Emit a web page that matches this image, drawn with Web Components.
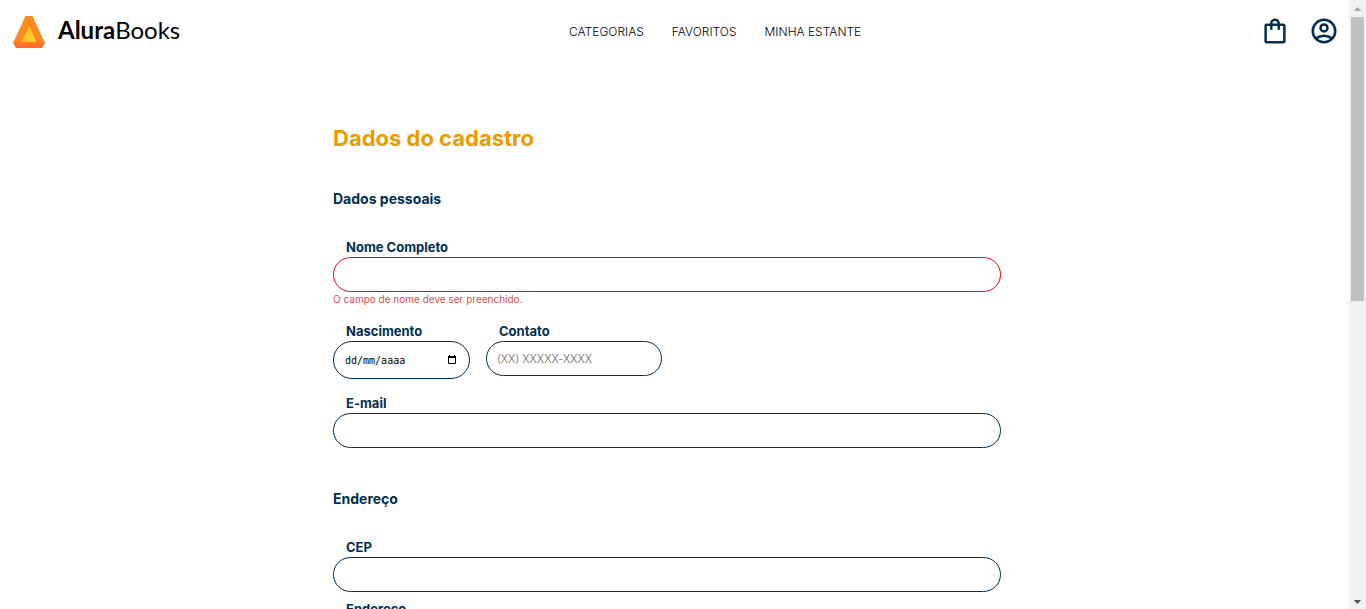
<!DOCTYPE html>
<html lang="pt-BR">
<head>
<meta charset="utf-8">
<title>AluraBooks - Cadastro</title>
<style>
  html, body { margin: 0; height: 100%; }
  body {
    --navy: #002f52;
    --orange: #eb9b00;
    background: #fff;
    color: #000;
    font-family: Inter, "Open Sans", sans-serif;
    overflow: hidden;
  }
</style>
</head>
<body>
<alura-shell>
  <alura-header slot="header"></alura-header>
  <main>
    <alura-form heading="Dados do cadastro">
      <form-section heading="Dados pessoais">
        <text-field label="Nome Completo" name="nome" error="O campo de nome deve ser preenchido."></text-field>
        <field-row>
          <date-field label="Nascimento" name="nascimento" hint="dd/mm/aaaa"></date-field>
          <text-field label="Contato" name="contato" type="tel" hint="(XX) XXXXX-XXXX"></text-field>
        </field-row>
        <text-field label="E-mail" name="email" type="email"></text-field>
      </form-section>
      <form-section heading="Endereço" compact>
        <text-field label="CEP" name="cep"></text-field>
        <text-field label="Endereço" name="endereco"></text-field>
      </form-section>
    </alura-form>
  </main>
</alura-shell>

<script>
  function define(name, render) {
    customElements.define(name, class extends HTMLElement {
      constructor() {
        super();
        this.attachShadow({ mode: 'open' });
      }
      connectedCallback() {
        this.shadowRoot.innerHTML = render(this);
      }
    });
  }

  const fieldStyle = `
    :host { display: block; }
    label {
      display: block;
      padding-left: 13px;
      color: var(--navy);
      font-size: 13px;
      font-weight: 700;
      line-height: 20px;
    }
    input {
      display: block;
      box-sizing: border-box;
      width: 100%;
      height: 35px;
      margin: 0;
      padding: 0 10px;
      border: 1px solid var(--navy);
      border-radius: 20px;
      outline: 0;
      background: #fff;
      color: #000;
      font: 300 11px/16px Inter, sans-serif;
    }
    input::placeholder { color: #666; opacity: 1; }
  `;

  define('alura-shell', () => `
    <style>
      :host { display: grid; grid-template-columns: minmax(0, 1fr) 17px; height: 100vh; }
      .page { overflow: hidden; }
    </style>
    <div class="page"><slot name="header"></slot><slot></slot></div>
    <page-scrollbar aria-hidden="true"></page-scrollbar>
  `);

  define('page-scrollbar', () => `
    <style>
      :host { display: flex; flex-direction: column; background: #f1f1f1; }
      svg { display: block; width: 17px; height: 17px; flex: none; }
      .track { flex: 1; padding: 0 2px; }
      .thumb { height: 49.4%; background: #c1c1c1; }
    </style>
    <svg viewBox="0 0 17 17"><path d="M5 11h7L8.500 7z" fill="#a3a3a3"/></svg>
    <div class="track"><div class="thumb"></div></div>
    <svg viewBox="0 0 17 17"><path d="M5 8h7L8.500 12z" fill="#505050"/></svg>
  `);

  define('alura-header', () => `
    <style>
      :host { display: block; }
      header {
        display: flex;
        align-items: center;
        justify-content: space-between;
        height: 64px;
        padding: 0 10px 0 13px;
        box-sizing: border-box;
      }
      a { color: inherit; text-decoration: none; }
      .brand { display: flex; align-items: center; gap: 13px; }
      .brand svg { display: block; width: 32px; height: 32px; }
      .brand span { font: 400 24px/28px Lato, sans-serif; padding-bottom: 4px; }
      nav { display: flex; gap: 28px; font-size: 12px; line-height: 20px; font-weight: 300; }
      .icons { display: flex; gap: 19px; padding: 0 0 2px 10px; }
      .icons svg { display: block; width: 30px; height: 30px; fill: none; stroke: var(--navy); stroke-width: 2; }
    </style>
    <header>
      <a class="brand" href="#">
        <svg viewBox="0 0 32 32" aria-hidden="true">
          <defs><linearGradient id="g" x1="0" y1="0" x2="0" y2="1"><stop offset=".7" stop-color="#ff8a22"/><stop offset="1" stop-color="#ff6626"/></linearGradient></defs>
          <path d="M12.500 0h7L32 27l-3 5H3l-3-5z" fill="url(#g)"/>
          <path d="M16 10l7.500 16h-15z" fill="#ffcb2b"/>
        </svg>
        <span><b>Alura</b>Books</span>
      </a>
      <nav>
        <a href="#">CATEGORIAS</a>
        <a href="#">FAVORITOS</a>
        <a href="#">MINHA ESTANTE</a>
      </nav>
      <div class="icons">
        <a href="#" aria-label="Sacola">
          <svg viewBox="0 0 24 24"><rect x="4.500" y="7" width="15" height="14" rx=".8"/><path d="M9 11V6a3 3 0 0 1 6 0v5"/></svg>
        </a>
        <a href="#" aria-label="Meu perfil">
          <svg viewBox="0 0 24 24"><circle cx="12" cy="12" r="9"/><circle cx="12" cy="9.500" r="2.800"/><path d="M5.500 18c3.800-3 9.200-3 13 0"/></svg>
        </a>
      </div>
    </header>
  `);

  define('alura-form', el => `
    <style>
      :host {
        display: grid;
        grid-template-columns: 333fr 668fr 348fr;
        padding-top: 58px;
      }
      form { grid-column: 2; }
      h1 { margin: 0 0 35px; color: var(--orange); font-size: 22px; line-height: 32px; font-weight: 700; }
    </style>
    <form novalidate>
      <h1>${el.getAttribute('heading')}</h1>
      <slot></slot>
    </form>
  `);

  define('form-section', el => `
    <style>
      :host { display: block; margin-bottom: 41px; }
      h2 { margin: 0 0 28px; color: var(--navy); font-size: 14px; line-height: 20px; font-weight: 700; }
      .fields { display: grid; gap: 14px; }
      :host([compact]) .fields { gap: 7px; }
    </style>
    <h2>${el.getAttribute('heading')}</h2>
    <div class="fields"><slot></slot></div>
  `);

  define('field-row', () => `
    <style>
      :host { display: grid; grid-template-columns: 137px 176px; gap: 16px; align-items: start; }
    </style>
    <slot></slot>
  `);

  define('text-field', el => {
    const error = el.getAttribute('error');
    return `
      <style>
        ${fieldStyle}
        :host([error]) input { border-color: #f00; }
        p { margin: 0; color: #d8504d; font-size: 10px; line-height: 15px; font-weight: 400; }
      </style>
      <label for="field">${el.getAttribute('label')}</label>
      <input id="field" name="${el.getAttribute('name')}" type="${el.getAttribute('type') || 'text'}"
        placeholder="${el.getAttribute('hint') || ''}" ${error ? 'aria-invalid="true" aria-describedby="error"' : ''}>
      ${error ? `<p id="error">${error}</p>` : ''}
    `;
  });

  define('date-field', el => `
    <style>
      ${fieldStyle}
      .box {
        display: flex;
        align-items: center;
        box-sizing: border-box;
        height: 38px;
        padding: 0 12px 0 11px;
        border: 1px solid var(--navy);
        border-radius: 20px;
      }
      input {
        flex: 1;
        min-width: 0;
        height: 20px;
        padding: 0;
        border: 0;
        font: 400 10px/16px "DejaVu Sans Mono", monospace;
      }
      input::placeholder { color: #000; }
      button { display: block; padding: 0; border: 0; background: none; }
      svg { display: block; width: 10px; height: 10px; }
    </style>
    <label for="field">${el.getAttribute('label')}</label>
    <div class="box">
      <input id="field" name="${el.getAttribute('name')}" type="text" inputmode="numeric" placeholder="${el.getAttribute('hint')}">
      <button type="button" aria-label="Abrir calendário">
        <svg viewBox="0 0 10 10"><path d="M1.500 1.500h7v7h-7z" fill="none" stroke="#000"/><path d="M1 1h8v2H1zM2 0h1v1H2zM7 0h1v1H7z"/></svg>
      </button>
    </div>
  `);
</script>
</body>
</html>
